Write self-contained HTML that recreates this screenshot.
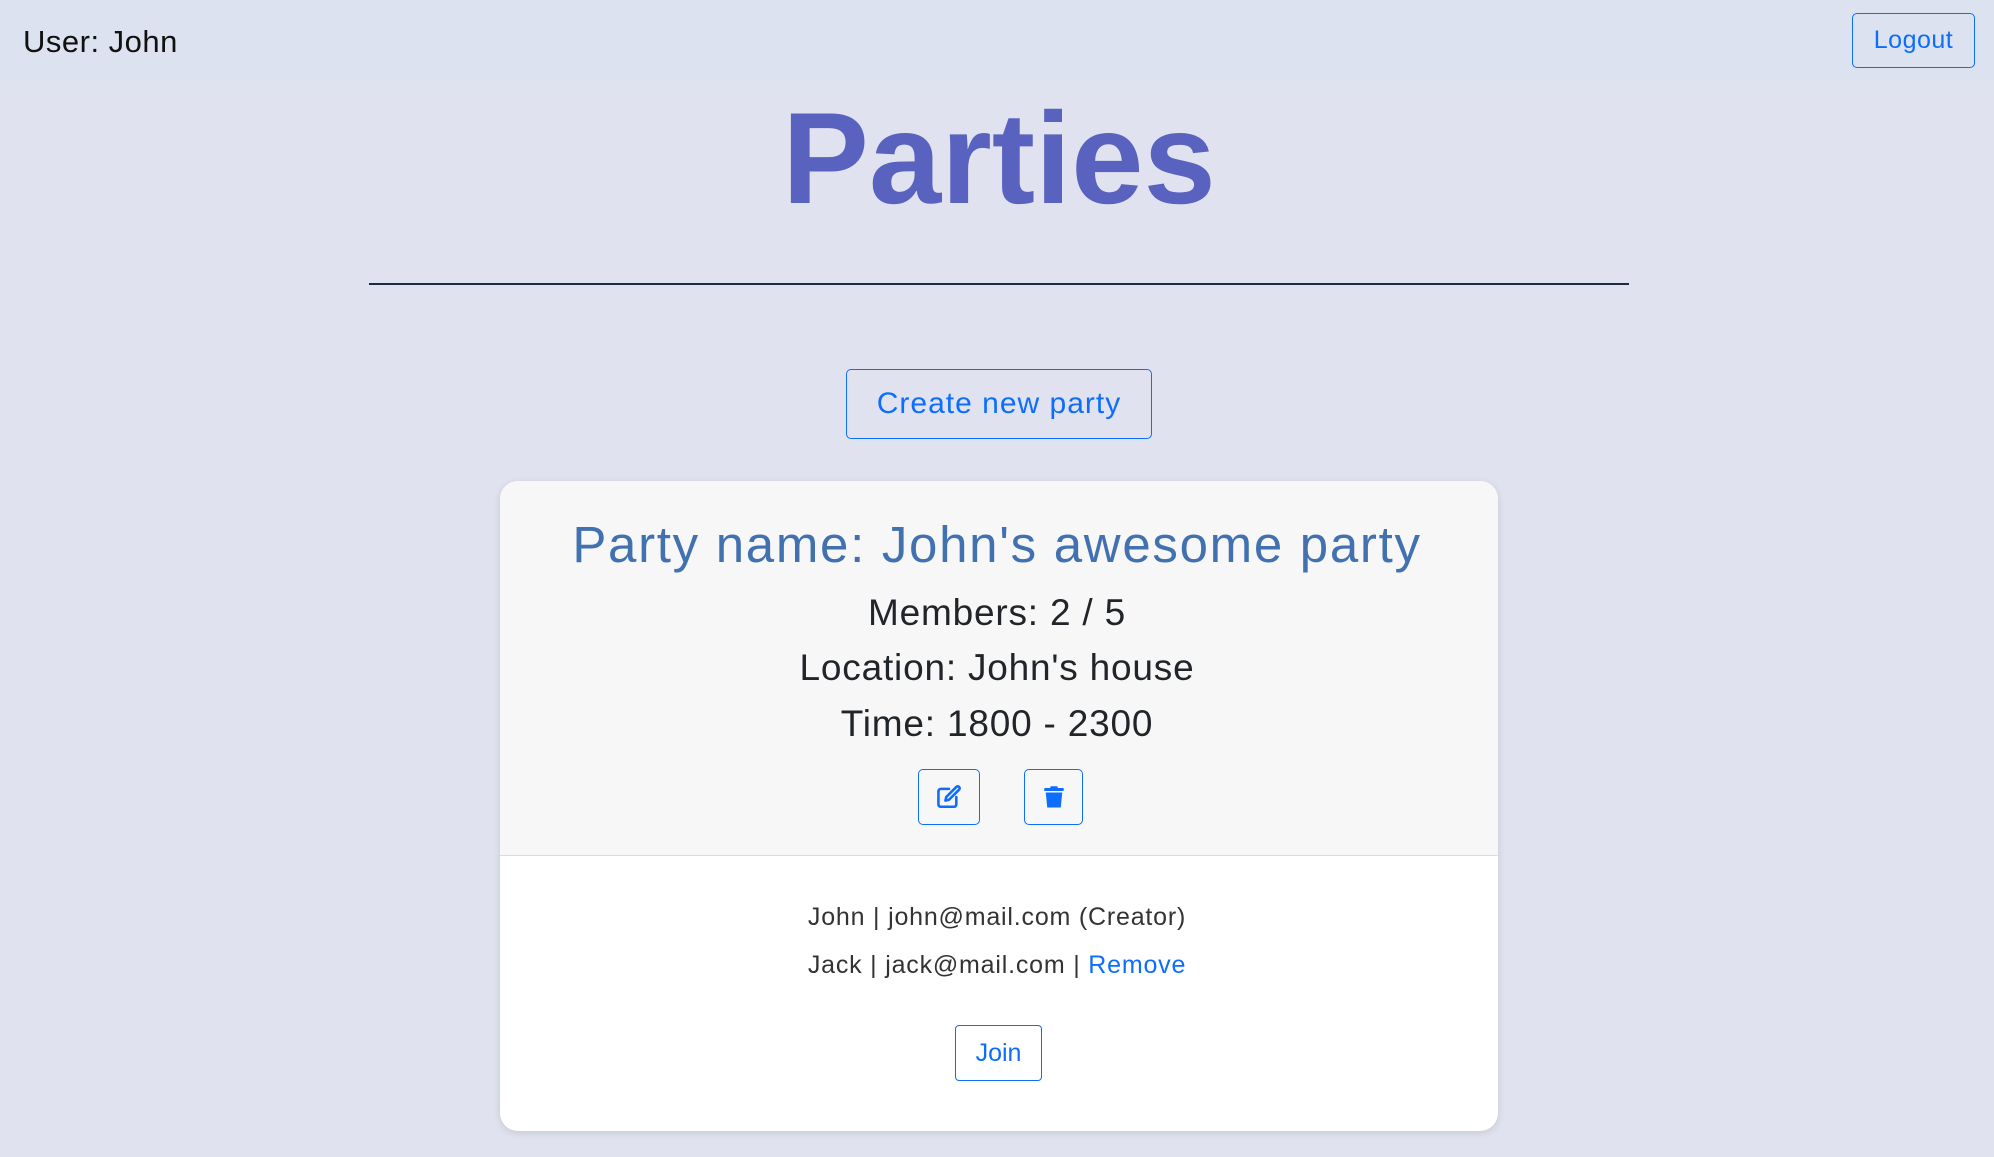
<!DOCTYPE html>
<html><head><style>
*{margin:0;padding:0;box-sizing:border-box}
body{width:1994px;height:1157px;background:#e0e3ef;font-family:"Liberation Sans",sans-serif;position:relative;overflow:hidden;color:#212529}
.hdr{position:absolute;left:0;top:0;width:1994px;height:81px;background:#dce2ef}
.user{position:absolute;left:23px;top:24px;font-size:31px;color:#111;letter-spacing:0.5px}
.btn{position:absolute;border:1.5px solid #0d6efd;color:#0d6efd;border-radius:5px;display:flex;align-items:center;justify-content:center;background:transparent}
.t{position:absolute;left:0;width:1994px;text-align:center;white-space:nowrap}
.card{position:absolute;left:500px;top:481px;width:998px;height:650px;border-radius:18px;background:#fff;overflow:hidden;box-shadow:0 2px 8px rgba(0,0,0,.12)}
.ch{position:absolute;left:0;top:0;width:998px;height:375px;background:#f7f7f7;border-bottom:1px solid #dcdcdc}
</style></head><body>
<div class="hdr"></div>
<div class="user">User: John</div>
<div class="btn" style="left:1852px;top:13px;width:123px;height:55px;font-size:25px;letter-spacing:0.5px">Logout</div>
<div class="t" style="top:83px;font-size:130px;font-weight:bold;color:#5a62bf;left:2px">Parties</div>
<div style="position:absolute;left:369px;top:283px;width:1260px;height:2px;background:#1e2a45"></div>
<div class="btn" style="left:846px;top:369px;width:306px;height:70px;font-size:30px;letter-spacing:1px">Create new party</div>
<div class="card"><div class="ch"></div></div>
<div class="t" style="top:515px;font-size:51px;color:#4271b0;letter-spacing:1.7px">Party name: John's awesome party</div>
<div class="t" style="top:592px;font-size:37px;letter-spacing:0.8px">Members: 2 / 5</div>
<div class="t" style="top:647px;font-size:37px;letter-spacing:0.8px">Location: John's house</div>
<div class="t" style="top:703px;font-size:37px;letter-spacing:0.8px">Time: 1800 - 2300</div>
<div class="btn" style="left:918px;top:769px;width:62px;height:56px">
<svg width="26" height="26" viewBox="0 0 16 16" fill="none" stroke="#0d6efd" stroke-width="1.6" stroke-linecap="round" stroke-linejoin="round"><path d="M8 3H3a1.5 1.5 0 0 0-1.5 1.5v8A1.5 1.5 0 0 0 3 14h8a1.5 1.5 0 0 0 1.5-1.5V8"/><path d="M12.5 1.8a1.2 1.2 0 0 1 1.7 1.7L8 9.7 5.8 10.2 6.3 8z"/></svg></div>
<div class="btn" style="left:1024px;top:769px;width:59px;height:56px">
<svg width="24" height="26" viewBox="0 0 16 16" fill="#0d6efd"><rect x="1.5" y="2" width="13" height="2" rx="0.5"/><rect x="5.5" y="0.8" width="5" height="2" rx="0.8"/><path d="M2.5 5h11l-1 10H3.5z"/></svg></div>
<div class="t" style="top:903px;font-size:25px;color:#333;letter-spacing:0.8px">John | john@mail.com (Creator)</div>
<div class="t" style="top:951px;font-size:25px;color:#333;letter-spacing:0.8px">Jack | jack@mail.com | <span style="color:#0d6efd">Remove</span></div>
<div class="btn" style="left:955px;top:1025px;width:87px;height:56px;font-size:25px;border-radius:4px">Join</div>
</body></html>
